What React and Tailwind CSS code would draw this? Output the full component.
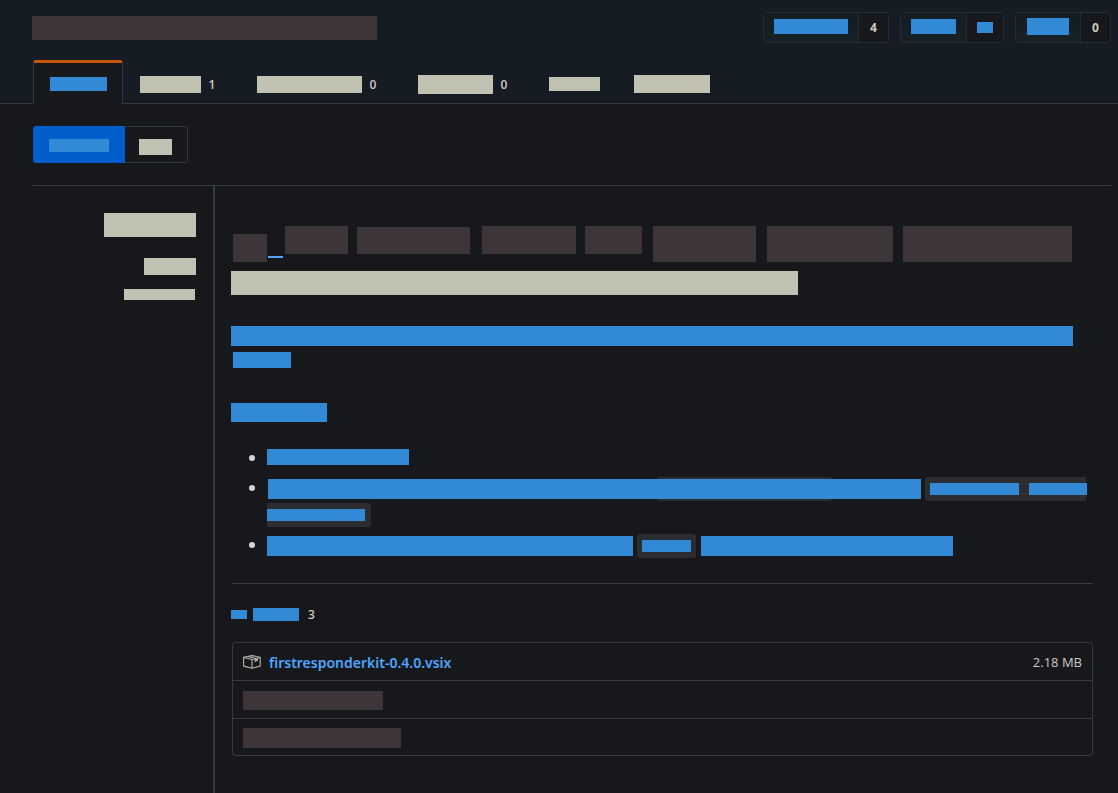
import React from "react";

const tones = {
  blue: "bg-[#3289d5]",
  sand: "bg-[#c1c2b2]",
  plum: "bg-[#3e353b]",
};

function Block({ tone = "blue", className = "" }) {
  return <span aria-hidden="true" className={`block max-w-full ${tones[tone]} ${className}`} />;
}

function Count({ children, weight = "font-bold" }) {
  return <span className={`text-xs leading-4 text-[#cdc9c2] ${weight}`}>{children}</span>;
}

function ActionButton({ label, labelClass, barClass, children, countClass }) {
  return (
    <div className="flex h-[31px] rounded-[3px] border border-[#222d35]">
      <button
        type="button"
        aria-label={label}
        className={`flex items-start border-r border-[#222d35] bg-linear-to-b from-[#151c24] to-[#172125] ${labelClass}`}
      >
        <Block className={barClass} />
      </button>
      <a
        href="#count"
        aria-label={`${label} count`}
        className={`flex items-center justify-center rounded-r-[2px] bg-[#17181b] ${countClass}`}
      >
        {children}
      </a>
    </div>
  );
}

function Tab({ label, tone = "sand", barClass, count, active }) {
  const look = active
    ? "w-[90px] rounded-t-[3px] border-x border-x-[#30363d] border-t-[#c9550a] bg-[#17181b] pl-4"
    : "border-t-transparent px-[17px]";
  return (
    <a
      href="#tab"
      aria-label={label}
      aria-current={active ? "page" : undefined}
      className={`flex h-11 items-center border-t-3 pt-px ${look}`}
    >
      <Block tone={tone} className={barClass} />
      {count !== undefined && (
        <span className="flex w-[22px] justify-center pt-px">
          <Count weight="font-semibold">{count}</Count>
        </span>
      )}
    </a>
  );
}

function Code({ className = "", children }) {
  return <code className={`flex h-6 items-center bg-[#2b2d30] ${className}`}>{children}</code>;
}

function Item({ className = "", children }) {
  return (
    <li className={`flex items-start ${className}`}>
      <span className="mt-[9px] mr-3 size-1.5 shrink-0 rounded-full bg-[#d8d4cd]" />
      <div className="min-w-0 grow">{children}</div>
    </li>
  );
}

function PackageIcon() {
  return (
    <svg
      width="18"
      height="14"
      viewBox="0 0 18 14"
      fill="none"
      stroke="#b9b4aa"
      strokeWidth="1.1"
      strokeLinejoin="round"
      aria-hidden="true"
      className="shrink-0"
    >
      <path d="M.6 2.3 9 .6l8.2 1.7v8.8L9 13.2.6 11.1Z" />
      <path d="M.6 2.5 9 4.5l8.2-2M9 4.5v8.7" />
      <path d="m4.8 1.5 8.2 2" />
      <path d="m11.6 3.9 3.2-.8v3.5l-1.6-.5-1.6 1.3Z" fill="#b9b4aa" stroke="none" />
    </svg>
  );
}

export default function App() {
  return (
    <div className="flex min-h-screen flex-col bg-[#17181b] font-['Open_Sans','Noto_Sans',sans-serif] text-[#cdc9c2]">
      <header className="border-b border-[#353a41] bg-[#151c24] pt-3">
        <div className="flex items-start justify-between gap-4 pr-[7px] pl-8">
          <h1 aria-label="Repository" className="mt-1 min-w-0">
            <Block tone="plum" className="h-6 w-[345px]" />
          </h1>
          <div className="flex gap-[11px]">
            <ActionButton label="Watch" labelClass="w-[95px] pt-1.5 pl-[10px]" barClass="h-[15px] w-[74px]" countClass="w-[29px]">
              <Count>4</Count>
            </ActionButton>
            <ActionButton label="Star" labelClass="w-[66px] pt-1.5 pl-[10px]" barClass="h-[15px] w-[45px]" countClass="w-9">
              <Block className="h-[11px] w-4" />
            </ActionButton>
            <ActionButton label="Fork" labelClass="w-[65px] pt-[5px] pl-[11px]" barClass="h-[17px] w-[42px]" countClass="w-[29px]">
              <Count>0</Count>
            </ActionButton>
          </div>
        </div>
        <nav className="mt-[17px] -mb-px flex pl-[33px]">
          <Tab label="Code" active tone="blue" barClass="h-[14px] w-[57px]" />
          <Tab label="Issues" barClass="h-[17px] w-[61px]" count="1" />
          <Tab label="Pull requests" barClass="h-[17px] w-[105px]" count="0" />
          <Tab label="Projects" barClass="h-[19px] w-[75px]" count="0" />
          <Tab label="Wiki" barClass="h-[14px] w-[51px]" />
          <Tab label="Insights" barClass="h-[18px] w-[76px]" />
        </nav>
      </header>

      <div className="flex grow flex-col pt-[22px] pr-[7px] pl-[33px]">
        <div className="flex pb-[22px]">
          <a href="#releases" aria-label="Releases" className="flex h-[37px] w-[92px] rounded-l-[3px] bg-[#005ecc] pt-[13px] pl-4">
            <Block className="h-[13px] w-[60px]" />
          </a>
          <a
            href="#tags"
            aria-label="Tags"
            className="flex h-[37px] w-[63px] rounded-r-[3px] border border-l-0 border-[#30363d] pt-3 pl-[14px]"
          >
            <Block tone="sand" className="h-4 w-[33px]" />
          </a>
        </div>

        <div className="flex grow border-t border-[#353a41]">
          <aside className="flex w-[180px] shrink-0 flex-col items-end pt-[27px] pr-[17px]">
            <Block tone="sand" className="h-6 w-[92px]" />
            <Block tone="sand" className="mt-[21px] h-[17px] w-[52px]" />
            <Block tone="sand" className="mt-[14px] mr-px h-[11px] w-[71px]" />
          </aside>

          <main className="min-w-0 grow border-l-2 border-[#353a41] pt-10 pr-[18px] pb-[37px] pl-4">
            <h2 aria-label="Release title" className="flex h-9 items-start pl-0.5">
              <Block tone="plum" className="mt-2 h-7 w-[34px]" />
              <a href="#release" aria-label="Release" className="ml-px h-8 w-[15px] border-b-2 border-[#4da6ff]" />
              <Block tone="plum" className="ml-0.5 h-7 w-[63px]" />
              <Block tone="plum" className="mt-px ml-[9px] h-[27px] w-[113px]" />
              <Block tone="plum" className="ml-3 h-7 w-[94px]" />
              <Block tone="plum" className="ml-[9px] h-7 w-[57px]" />
              <Block tone="plum" className="ml-[11px] h-9 w-[103px]" />
              <Block tone="plum" className="ml-[11px] h-9 w-[126px]" />
              <Block tone="plum" className="ml-[10px] h-9 w-[169px]" />
            </h2>
            <Block tone="sand" className="mt-[9px] h-6 w-[567px]" />

            <Block className="mt-[31px] h-5 w-[842px]" />
            <Block className="mt-1.5 ml-0.5 h-4 w-[58px]" />

            <Block className="mt-[35px] h-[19px] w-24" />

            <ul className="mt-6 pl-[18px]">
              <Item>
                <Block className="mt-[3px] h-4 w-[142px]" />
              </Item>
              <Item className="mt-[11px]">
                <div className="flex items-center pt-px">
                  <div className="relative ml-px flex h-6 w-[653px] items-center">
                    <span className="absolute top-0 left-[389px] h-6 w-[175px] rounded-[3px] bg-[#2b2d30]" />
                    <Block className="relative h-5 w-full" />
                  </div>
                  <Code className="ml-1 w-[161px] rounded-l-[3px] pl-[5px]">
                    <Block className="h-3 w-[89px] shrink-0" />
                    <Block className="ml-[10px] h-3 w-[58px] shrink-0" />
                  </Code>
                </div>
                <Code className="mt-0.5 w-[104px] rounded-r-[3px]">
                  <Block className="h-3 w-[98px]" />
                </Code>
              </Item>
              <Item className="mt-[6px]">
                <div className="flex items-center pt-px">
                  <Block className="h-5 w-[366px]" />
                  <Code className="ml-1 w-[59px] rounded-[3px] px-[5px]">
                    <Block className="h-3 w-[49px]" />
                  </Code>
                  <Block className="ml-[5px] h-5 w-[252px]" />
                </div>
              </Item>
            </ul>

            <hr className="mt-[25px] ml-px border-[#353a41]" />

            <button type="button" aria-label="Assets" className="mt-[22px] flex h-4 items-center">
              <Block className="h-[9px] w-4" />
              <Block className="ml-1.5 h-[13px] w-[46px]" />
              <span className="ml-[9px] flex pt-px">
                <Count weight="font-semibold">3</Count>
              </span>
            </button>

            <ul className="mt-5 ml-px divide-y divide-[#353a41] rounded-[3px] border border-[#353a41]">
              <li className="flex h-[38px] items-center px-[10px]">
                <PackageIcon />
                <a
                  href="#download"
                  className="ml-2 pt-0.5 font-['Noto_Sans','Open_Sans',sans-serif] text-sm leading-5 font-semibold text-[#4da6ff]"
                >
                  firstresponderkit-0.4.0.vsix
                </a>
                <span className="ml-auto text-[13px] leading-5">2.18 MB</span>
              </li>
              <li className="flex h-[38px] items-center px-[10px] pt-0.5">
                <Block tone="plum" className="h-[19px] w-[140px]" />
              </li>
              <li className="flex h-9 items-center px-[10px] pt-0.5">
                <Block tone="plum" className="h-5 w-[158px]" />
              </li>
            </ul>
          </main>
        </div>
      </div>
    </div>
  );
}
